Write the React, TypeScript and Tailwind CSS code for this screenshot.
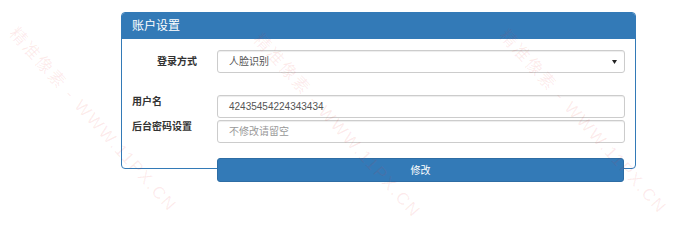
const FONT = "font-['Liberation_Sans','Noto_Sans_CJK_SC',sans-serif]";

function Watermark({ x, y }: { x: number; y: number }) {
  return (
    <span
      className="pointer-events-none absolute origin-top-left rotate-[48deg] whitespace-nowrap text-[17px] tracking-[2px] text-[rgba(230,40,40,0.09)]"
      style={{ left: x, top: y }}
    >
      精准像素 - WWW.11PX.CN
    </span>
  );
}

export default function App() {
  return (
    <div className={`relative h-[246px] w-[700px] overflow-hidden bg-white pl-[121px] pt-[12px] ${FONT}`}>
      <div className="w-[515px] rounded-[4px] border border-[#337ab7] bg-white">
        <div className="flex h-[26px] items-center rounded-t-[3px] bg-[#337ab7] px-[10px] text-[12px] text-white">
          账户设置
        </div>
        <div className="h-[129px] pt-[11px]">
          <div className="flex items-center">
            <div className="w-[95px] pr-[20px] text-right text-[10px] font-bold text-[#333]">登录方式</div>
            <div className="relative w-[408px]">
              <div className="flex h-[23px] items-center rounded-[3px] border border-[#ccc] pl-[11px] text-[10px] text-[#555] shadow-[inset_0_1px_1px_rgba(0,0,0,0.075)]">
                人脸识别
              </div>
              <svg className="absolute right-[8px] top-[10px]" width="5" height="4" viewBox="0 0 5 4">
                <path d="M0 0h5L2.5 4z" fill="#222" />
              </svg>
            </div>
          </div>

          <div className="mt-[22px] flex items-start">
            <div className="w-[95px] pl-[10px] text-[10px] font-bold leading-[14px] text-[#333]">用户名</div>
            <div className="flex h-[23px] w-[408px] items-center rounded-[3px] border border-[#ccc] pl-[11px] text-[10px] text-[#555] shadow-[inset_0_1px_1px_rgba(0,0,0,0.075)]">
              42435454224343434
            </div>
          </div>
          <div className="mt-[2px] flex items-start">
            <div className="w-[95px] pl-[10px] text-[10px] font-bold leading-[14px] text-[#333]">后台密码设置</div>
            <div className="flex h-[23px] w-[408px] items-center rounded-[3px] border border-[#ccc] pl-[11px] text-[10px] text-[#999] shadow-[inset_0_1px_1px_rgba(0,0,0,0.075)]">
              不修改请留空
            </div>
          </div>

          <button
            type="button"
            className="ml-[95px] mt-[15px] flex h-[24px] w-[407px] items-center justify-center rounded-[3px] border border-[#2e6da4] bg-[#337ab7] text-[10px] text-white"
          >
            修改
          </button>
        </div>
      </div>

      <Watermark x={22} y={22} />
      <Watermark x={266} y={28} />
      <Watermark x={512} y={24} />
    </div>
  );
}
